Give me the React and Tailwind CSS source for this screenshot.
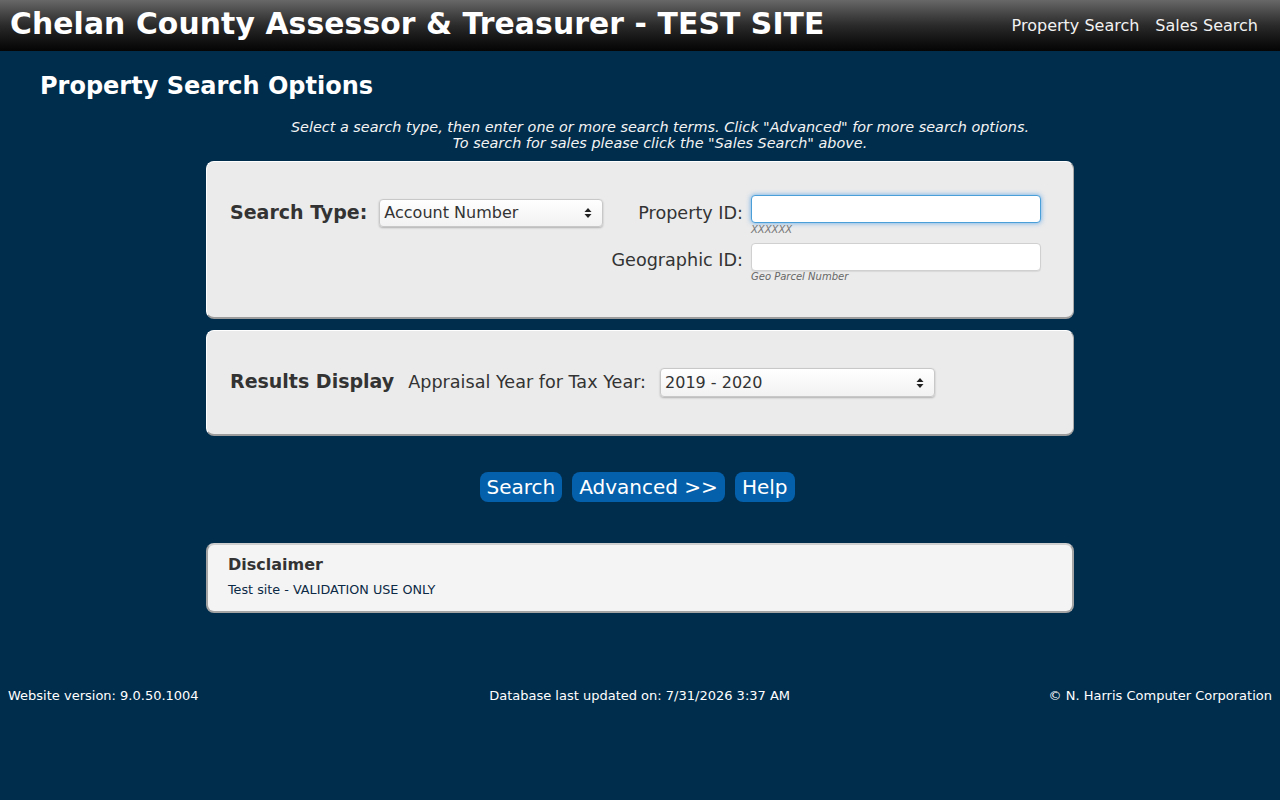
import React from "react";

const font = { fontFamily: '"DejaVu Sans", Verdana, sans-serif' };

function Updown() {
  return (
    <svg width="8" height="12" viewBox="0 0 8 12" className="shrink-0">
      <path d="M4 1 L7.5 5 L0.5 5 Z" fill="#222" />
      <path d="M4 11 L7.5 7 L0.5 7 Z" fill="#222" />
    </svg>
  );
}

function FakeSelect({ value, className }) {
  return (
    <div
      className={`flex items-center justify-between rounded-[4px] border border-[#c8c8c8] bg-gradient-to-b from-white to-[#f2f2f2] pl-1 pr-[10px] text-[16px] text-[#333] shadow-[0_1px_2px_rgba(0,0,0,0.25)] ${className}`}
    >
      <span>{value}</span>
      <Updown />
    </div>
  );
}

export default function App() {
  return (
    <div className="min-h-[800px] bg-[#012d4c] text-white" style={font}>
      {/* top banner */}
      <header className="flex h-[51px] items-center justify-between bg-gradient-to-b from-[#686868] via-[#2a2a2a] to-[#050505] pl-[10px] pr-[22px]">
        <h1 className="-mt-[4px] text-[29.8px] font-bold leading-none tracking-[0.1px] text-white">
          Chelan County Assessor &amp; Treasurer - TEST SITE
        </h1>
        <nav className="flex gap-[16px] text-[16px] text-[#f2f2f2]">
          <span>Property Search</span>
          <span>Sales Search</span>
        </nav>
      </header>

      <main className="pl-[40px]">
        <h2 className="pt-[21px] text-[24px] font-bold leading-[28px]">Property Search Options</h2>
        <p className="mt-[19px] text-center text-[14.4px] italic leading-[16px] text-[#f4f4f4]">
          Select a search type, then enter one or more search terms. Click "Advanced" for more search options.
          <br />
          To search for sales please click the "Sales Search" above.
        </p>
      </main>

      <div className="mx-auto mt-[10px] flex w-[868px] flex-col">
        {/* search type panel */}
        <section className="flex h-[158px] items-start rounded-[8px] border border-b-2 border-t-white border-l-white border-r-[#a9a9a9] border-b-[#9c9c9c] bg-[#ebebeb] pl-[23px] pr-[32px] pt-[33px] text-[#333]">
          <div className="mt-[4px] flex h-[28px] items-center">
            <span className="-mt-[2px] text-[19px] font-bold">Search Type:</span>
            <FakeSelect value="Account Number" className="ml-[12px] h-[28px] w-[224px]" />
          </div>
          <div className="ml-auto grid content-start grid-cols-[auto_290px] gap-x-[8px]">
            <span className="mt-[7px] text-right text-[17.6px] leading-[22px] text-[#333]">Property ID:</span>
            <div className="flex flex-col">
              <div className="h-[28px] w-[290px] rounded-[4px] border border-[#4a9fd8] bg-white shadow-[0_0_5px_rgba(60,150,230,0.8)]" />
              <span className="mt-[1px] text-[10px] italic leading-[12px] text-[#777]">XXXXXX</span>
            </div>
            <span className="mt-[13px] text-right text-[17.6px] leading-[22px] text-[#333]">Geographic ID:</span>
            <div className="mt-[7px] flex flex-col">
              <div className="h-[28px] w-[290px] rounded-[4px] border border-[#d0d0d0] bg-white shadow-[0_1px_1px_rgba(0,0,0,0.08)]" />
              <span className="mt-[0px] text-[10px] italic leading-[12px] text-[#666]">Geo Parcel Number</span>
            </div>
          </div>
        </section>

        {/* results display panel */}
        <section className="mt-[11px] flex h-[106px] items-center rounded-[8px] border border-b-2 border-t-white border-l-white border-r-[#a9a9a9] border-b-[#9c9c9c] bg-[#ebebeb] pl-[23px] text-[#333]">
          <span className="-mt-[2px] text-[19px] font-bold">Results Display</span>
          <span className="ml-[14px] text-[17.6px]">Appraisal Year for Tax Year:</span>
          <FakeSelect value="2019 - 2020" className="ml-[14px] h-[29px] w-[275px]" />
        </section>

        {/* actions */}
        <div className="mt-[36px] flex justify-center gap-[10px] pr-[6px]">
          <button className="h-[30px] rounded-[8px] bg-[#0560ab] px-[7px] text-[20px] leading-[30px] text-white">Search</button>
          <button className="h-[30px] rounded-[8px] bg-[#0560ab] px-[7px] text-[20px] leading-[30px] text-white">Advanced &gt;&gt;</button>
          <button className="h-[30px] rounded-[8px] bg-[#0560ab] px-[7px] text-[20px] leading-[30px] text-white">Help</button>
        </div>

        {/* disclaimer */}
        <section className="mt-[41px] h-[70px] rounded-[8px] border-2 border-[#a4a4a4] border-t-[#cfcfcf] bg-[#f4f4f4] px-[20px] pt-[10px]">
          <h3 className="text-[16px] font-bold leading-[20px] text-[#333]">Disclaimer</h3>
          <p className="mt-[7px] text-[12.75px] leading-[16px] text-[#0c2a45]">Test site - VALIDATION USE ONLY</p>
        </section>
      </div>

      <footer className="mt-[75px] flex justify-between px-[8px] text-[13px] leading-[16px] text-white">
        <span>Website version: 9.0.50.1004</span>
        <span className="pl-[32px]">Database last updated on: 7/31/2026 3:37 AM</span>
        <span>© N. Harris Computer Corporation</span>
      </footer>
    </div>
  );
}
